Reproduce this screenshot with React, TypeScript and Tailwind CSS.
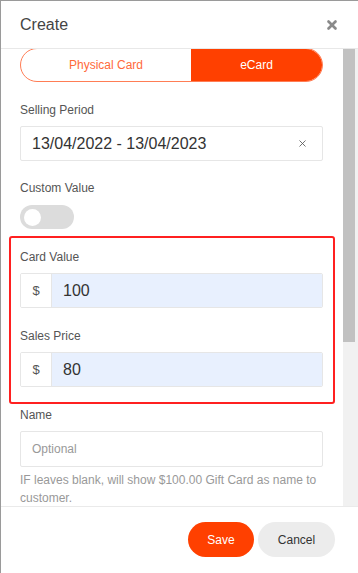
import { X } from "lucide-react";

const Label = ({ children, className = "" }: { children: React.ReactNode; className?: string }) => (
  <p className={`text-[12px] leading-4 text-[#555] ${className}`}>{children}</p>
);

const MoneyInput = ({ value }: { value: string }) => (
  <div className="mt-2 flex h-[35px] overflow-hidden rounded-[2px] border border-[#e6e6e6]">
    <div className="flex w-[31px] items-center justify-center border-r border-[#e6e6e6] bg-white text-[13px] text-[#555]">$</div>
    <div className="flex flex-1 items-center bg-[#e8f0fe] pl-[11px] text-[16px] text-[#333]">{value}</div>
  </div>
);

export default function App() {
  return (
    <div className="flex h-[573px] w-[358px] flex-col overflow-hidden border-l border-t border-[#9a9a9a] bg-white font-['Liberation_Sans',Arial,sans-serif]">
      <header className="flex h-[48px] shrink-0 items-center justify-between border-b border-[#e8e8e8] pl-[19px] pr-[19px]">
        <h1 className="text-[16px] text-[#444]">Create</h1>
        <X size={14} strokeWidth={4.5} className="text-[#8a8a8a]" />
      </header>

      <div className="flex min-h-0 flex-1">
        <div className="min-w-0 flex-1 overflow-hidden pl-[19px] pr-[20px]">
          <div className="-mt-[1px] flex h-[34px] overflow-hidden rounded-full border border-[#ff7d55] text-[12px]">
            <div className="flex flex-1 items-center justify-center text-[#ff6a3a]">Physical Card</div>
            <div className="flex w-[131px] items-center justify-center bg-[#ff4000] text-white">eCard</div>
          </div>

          <Label className="mt-[20px]">Selling Period</Label>
          <div className="mt-2 flex h-[35px] items-center justify-between rounded-[2px] border border-[#e6e6e6] pl-[11px] pr-[14px]">
            <span className="text-[16px] text-[#333]">13/04/2022 - 13/04/2023</span>
            <X size={11} strokeWidth={1.8} className="text-[#555]" />
          </div>

          <Label className="mt-[19px]">Custom Value</Label>
          <div className="mt-[9px] flex h-[24px] w-[54px] items-center rounded-full bg-[#dcdcdc] pl-[4px]">
            <div className="h-[17px] w-[17px] rounded-full bg-white" />
          </div>

          <div className="-ml-[11px] -mr-[12px] mt-[7px] rounded-[3px] border-2 border-[#ff2020] pb-[15px] pl-[9px] pr-[10px] pt-[11px]">
            <Label>Card Value</Label>
            <MoneyInput value="100" />
            <Label className="mt-[20px]">Sales Price</Label>
            <MoneyInput value="80" />
          </div>

          <Label className="mt-[3px]">Name</Label>
          <div className="mt-2 flex h-[36px] items-center rounded-[2px] border border-[#e6e6e6] pl-[11px] text-[12px] text-[#999]">
            Optional
          </div>
          <p className="mt-[4px] text-[12px] leading-[18px] text-[#999]">
            IF leaves blank, will show $100.00 Gift Card as name to customer.
          </p>
        </div>

        <div className="w-[15px] shrink-0 bg-[#f1f1f1]">
          <div className="h-[293px] w-[12px] bg-[#c1c1c1]" />
        </div>
      </div>

      <footer className="flex h-[67px] shrink-0 items-start justify-end gap-1 border-t border-[#eaeaea] pr-[23px] pt-[15px] text-[12px]">
        <button className="h-[35px] w-[66px] rounded-full bg-[#ff4000] text-white">Save</button>
        <button className="h-[35px] w-[77px] rounded-full bg-[#ececec] text-[#333]">Cancel</button>
      </footer>
    </div>
  );
}
